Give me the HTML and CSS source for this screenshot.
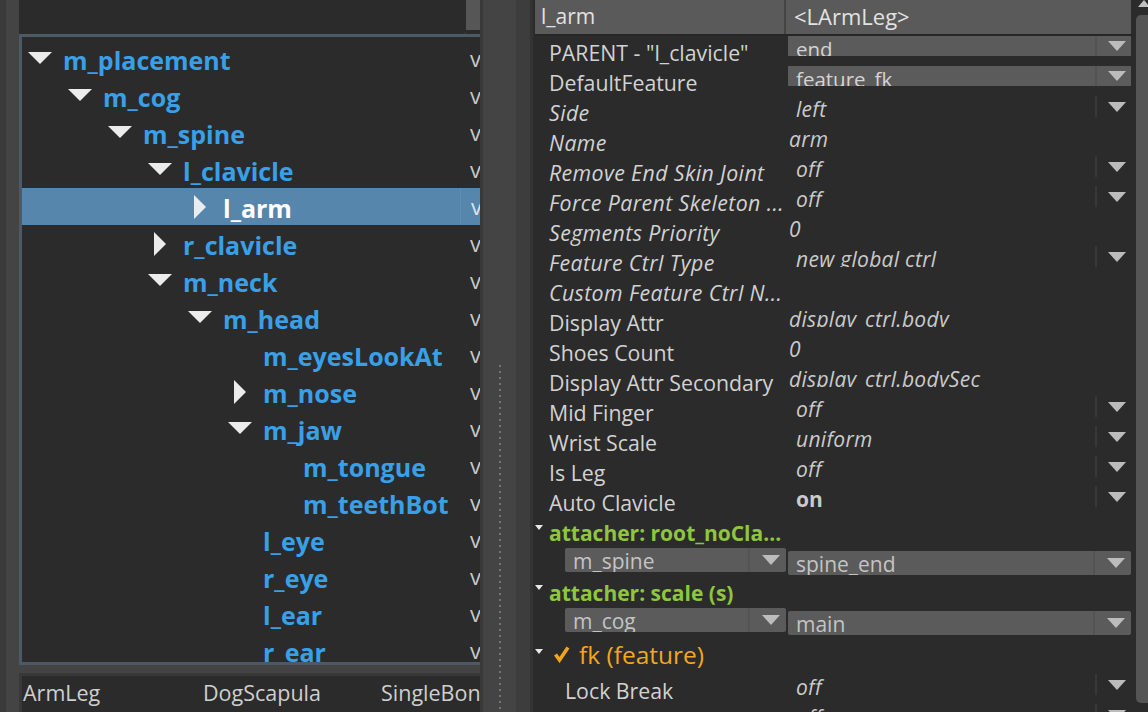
FILE: index.html
```html
<!DOCTYPE html>
<html>
<head>
<meta charset="utf-8">
<title>Rig Editor</title>
<link rel="stylesheet" href="styles.css">
</head>
<body>
<div class="app">
  <div class="left">
    <div class="topbox"><div class="topfill"></div><div class="topscroll"></div></div>
    <div class="tree">
      <div class="row d0"><span class="tw exp"></span><span class="name">m_placement</span><span class="vis">v</span></div>
      <div class="row d1"><span class="tw exp"></span><span class="name">m_cog</span><span class="vis">v</span></div>
      <div class="row d2"><span class="tw exp"></span><span class="name">m_spine</span><span class="vis">v</span></div>
      <div class="row d3"><span class="tw exp"></span><span class="name">l_clavicle</span><span class="vis">v</span></div>
      <div class="row d4 sel"><span class="tw col"></span><span class="name">l_arm</span><span class="vis">v</span></div>
      <div class="row d3"><span class="tw col"></span><span class="name">r_clavicle</span><span class="vis">v</span></div>
      <div class="row d3"><span class="tw exp"></span><span class="name">m_neck</span><span class="vis">v</span></div>
      <div class="row d4"><span class="tw exp"></span><span class="name">m_head</span><span class="vis">v</span></div>
      <div class="row d5"><span class="tw"></span><span class="name">m_eyesLookAt</span><span class="vis">v</span></div>
      <div class="row d5"><span class="tw col"></span><span class="name">m_nose</span><span class="vis">v</span></div>
      <div class="row d5"><span class="tw exp"></span><span class="name">m_jaw</span><span class="vis">v</span></div>
      <div class="row d6"><span class="tw"></span><span class="name">m_tongue</span><span class="vis">v</span></div>
      <div class="row d6"><span class="tw"></span><span class="name">m_teethBot</span><span class="vis">v</span></div>
      <div class="row d5"><span class="tw"></span><span class="name">l_eye</span><span class="vis">v</span></div>
      <div class="row d5"><span class="tw"></span><span class="name">r_eye</span><span class="vis">v</span></div>
      <div class="row d5"><span class="tw"></span><span class="name">l_ear</span><span class="vis">v</span></div>
      <div class="row d5"><span class="tw"></span><span class="name">r_ear</span><span class="vis">v</span></div>
    </div>
    <div class="list">
      <span class="item">ArmLeg</span>
      <span class="item">DogScapula</span>
      <span class="item">SingleBone</span>
    </div>
  </div>

  <div class="splitter">
    <div class="sp-a"></div>
    <div class="sp-b"><div class="dots"></div></div>
    <div class="sp-c"></div>
  </div>

  <div class="rpanel">
    <div class="props">
      <div class="hdr">
        <div class="hc hc1">l_arm</div>
        <div class="hc hc2">&lt;LArmLeg&gt;</div>
      </div>
      <div class="pbody">
        <div class="prow"><div class="lab">PARENT - "l_clavicle"</div><div class="val filled"><span class="vt">end</span><span class="dd"><i class="arr"></i></span></div></div>
        <div class="prow"><div class="lab">DefaultFeature</div><div class="val filled"><span class="vt">feature_fk</span><span class="dd"><i class="arr"></i></span></div></div>
        <div class="prow"><div class="lab it">Side</div><div class="val combo"><span class="vt">left</span><span class="dd"><i class="arr"></i></span></div></div>
        <div class="prow"><div class="lab it">Name</div><div class="val text"><span class="vt">arm</span></div></div>
        <div class="prow"><div class="lab it">Remove End Skin Joint</div><div class="val combo"><span class="vt">off</span><span class="dd"><i class="arr"></i></span></div></div>
        <div class="prow"><div class="lab it">Force Parent Skeleton ...</div><div class="val combo"><span class="vt">off</span><span class="dd"><i class="arr"></i></span></div></div>
        <div class="prow"><div class="lab it">Segments Priority</div><div class="val text"><span class="vt">0</span></div></div>
        <div class="prow"><div class="lab it">Feature Ctrl Type</div><div class="val combo"><span class="vt">new global ctrl</span><span class="dd"><i class="arr"></i></span></div></div>
        <div class="prow"><div class="lab it">Custom Feature Ctrl N...</div><div class="val text"><span class="vt"></span></div></div>
        <div class="prow"><div class="lab">Display Attr</div><div class="val text"><span class="vt">display_ctrl.body</span></div></div>
        <div class="prow"><div class="lab">Shoes Count</div><div class="val text"><span class="vt">0</span></div></div>
        <div class="prow"><div class="lab">Display Attr Secondary</div><div class="val text"><span class="vt">display_ctrl.bodySec</span></div></div>
        <div class="prow"><div class="lab">Mid Finger</div><div class="val combo"><span class="vt">off</span><span class="dd"><i class="arr"></i></span></div></div>
        <div class="prow"><div class="lab">Wrist Scale</div><div class="val combo"><span class="vt">uniform</span><span class="dd"><i class="arr"></i></span></div></div>
        <div class="prow"><div class="lab">Is Leg</div><div class="val combo"><span class="vt">off</span><span class="dd"><i class="arr"></i></span></div></div>
        <div class="prow"><div class="lab">Auto Clavicle</div><div class="val combo"><span class="vt bold">on</span><span class="dd"><i class="arr"></i></span></div></div>

        <div class="grp"><i class="gtri"></i><span class="gtitle green">attacher: root_noCla...</span></div>
        <div class="pair">
          <div class="box bl"><span class="bt">m_spine</span><span class="bdd"><i class="arr"></i></span></div>
          <div class="box br"><span class="bt">spine_end</span><span class="bdd"><i class="arr"></i></span></div>
        </div>
        <div class="grp"><i class="gtri"></i><span class="gtitle green">attacher: scale (s)</span></div>
        <div class="pair">
          <div class="box bl"><span class="bt">m_cog</span><span class="bdd"><i class="arr"></i></span></div>
          <div class="box br"><span class="bt">main</span><span class="bdd"><i class="arr"></i></span></div>
        </div>
        <div class="grp feat"><i class="gtri"></i><svg class="check" width="17" height="18" viewBox="0 0 17 18"><path d="M2.5 9.5 L6.5 15 L15 2.5" fill="none" stroke="#f0a51c" stroke-width="3.6" stroke-linejoin="miter" stroke-linecap="butt"/></svg><span class="ftitle">fk (feature)</span></div>
        <div class="prow sub"><div class="lab">Lock Break</div><div class="val combo"><span class="vt">off</span><span class="dd"><i class="arr"></i></span></div></div>
        <div class="prow sub"><div class="lab">Lock Length</div><div class="val combo"><span class="vt">off</span><span class="dd"><i class="arr"></i></span></div></div>
      </div>
    </div>
    <div class="vscroll"><i class="up"></i><div class="thumb"></div></div>
  </div>
</div>
</body>
</html>
```

FILE: styles.css
```css
* { box-sizing: border-box; margin: 0; padding: 0; }
html, body { width: 1148px; height: 712px; overflow: hidden; background: #444; }
body { font-family: "Open Sans", "Noto Sans", sans-serif; color: #cfcfcf; }

.app { display: flex; height: 712px; }

/* ---------- left panel ---------- */
.left {
  width: 480px; flex: none; display: flex; flex-direction: column;
  border-left: 6px solid #3a3a3a; padding-left: 13px; height: 712px; overflow: hidden;
}
.topbox { height: 34px; display: flex; flex: none; }
.topfill { flex: 1; background: #2b2b2b; border-bottom-right-radius: 3px; }
.topscroll { width: 14px; background: #2b2b2b; }
.topscroll::before { content: ""; display: block; height: 30px; background: #565656; }

.tree {
  height: 631px; flex: none; background: #2b2b2b; overflow: hidden;
  border-top: 3px solid #4d5a66; border-left: 3px solid #4d5a66; border-bottom: 3px solid #4d5a66;
  padding-top: 3px;
}
.row {
  height: 37px; display: flex; align-items: flex-start; white-space: nowrap;
  font-weight: 700; font-size: 25px; color: #39a0e8;
}
.row.d0 { padding-left: 6px; }
.row.d1 { padding-left: 46px; }
.row.d2 { padding-left: 86px; }
.row.d3 { padding-left: 126px; }
.row.d4 { padding-left: 166px; }
.row.d5 { padding-left: 206px; }
.row.d6 { padding-left: 246px; }
.row.sel { background: #5686ab; color: #fff; }
.tw { width: 24px; height: 37px; margin-right: 11px; flex: none; display: flex; align-items: center; justify-content: center; }
.tw.exp::before { content: ""; display: block; width: 0; height: 0; border-left: 12px solid transparent; border-right: 12px solid transparent; border-top: 12px solid #ececec; margin-top: -1px; }
.tw.col::before { content: ""; display: block; width: 0; height: 0; border-top: 12px solid transparent; border-bottom: 12px solid transparent; border-left: 12px solid #ececec; }
.name { flex: 1; line-height: 37px; padding-top: 2px; overflow: hidden; }
.vis { width: 20px; flex: none; padding-left: 10px; font-weight: 400; color: #c8c8c8; font-size: 22px; line-height: 37px; overflow: hidden; }
.row.sel .vis { border-left: 1px solid #5f8fb3; color: #d8e4ee; }

.list {
  margin-top: 8px; height: 39px; flex: none; background: #2b2b2b;
  border-top: 3px solid #383838; border-left: 3px solid #383838;
  display: flex; overflow: hidden; white-space: nowrap;
  font-size: 21.5px; line-height: 34px; color: #cfcfcf;
}
.item { flex: none; width: 180px; padding-left: 1px; overflow: hidden; }
.item:nth-child(2) { width: 178px; }
.item:nth-child(3) { width: 100px; }

/* ---------- splitter ---------- */
.splitter { width: 53px; flex: none; display: flex; }
.sp-a { width: 3px; background: #393939; }
.sp-b { width: 33px; background: #444; position: relative; }
.dots {
  position: absolute; left: 16px; top: 365px; width: 2px; bottom: 0;
  background: repeating-linear-gradient(to bottom, #747474 0 2px, transparent 2px 6px);
}
.sp-c { width: 17px; background: #3d3d3d; border-right: 3px solid #333; }

/* ---------- right panel ---------- */
.rpanel { flex: 1; display: flex; background: #2b2b2b; padding-left: 2px; }
.props { width: 598px; flex: none; }
.hdr { height: 36px; display: flex; border-bottom: 2px solid #262626; }
.hc { background: #5a5a5a; height: 34px; font-size: 22px; line-height: 32px; color: #e2e2e2; white-space: nowrap; }
.hc1 { width: 251px; padding-left: 6px; border-right: 2px solid #444; font-size: 21px; }
.hc2 { width: 345px; padding-left: 8px; }

.prow { height: 30px; display: flex; }
.lab { width: 253px; flex: none; padding-left: 14px; font-size: 21.3px; line-height: 30px; padding-top: 2px; white-space: nowrap; color: #d2d2d2; overflow: hidden; }
.lab.it { font-style: italic; letter-spacing: 0.4px; }
.val { width: 343px; flex: none; height: 21px; display: flex; overflow: hidden; }
.vt { flex: 1; font-size: 21px; line-height: 26px; font-style: italic; letter-spacing: 0.3px; white-space: nowrap; color: #cacaca; overflow: hidden; }
.vt.bold { font-style: normal; font-weight: 700; letter-spacing: 0; }
.val.combo .vt { padding-left: 8px; }
.val.text .vt { padding-left: 1px; }
.val.filled { background: #5b5b5b; height: 20px; }
.val.filled .vt { font-style: normal; letter-spacing: 0; font-size: 20.5px; padding-left: 8px; color: #d4d4d4; }
.dd { width: 36px; flex: none; border-left: 2px solid #383838; display: flex; align-items: center; padding-left: 11px; }
.val.filled .dd { border-left-color: #535353; }
.arr { display: block; width: 0; height: 0; border-left: 9px solid transparent; border-right: 9px solid transparent; border-top: 10px solid #bcbcbc; }

.grp { height: 30px; display: flex; align-items: center; white-space: nowrap; }
.gtri { display: block; width: 0; height: 0; border-left: 4px solid transparent; border-right: 4px solid transparent; border-top: 5px solid #e8e8e8; margin: 0 6px 8px 0; }
.gtitle { font-size: 21px; font-weight: 700; line-height: 30px; padding-top: 4px; }
.green { color: #8dc63f; }

.pair { height: 30px; display: flex; padding-left: 30px; align-items: flex-start; }
.box { height: 24px; display: flex; background: #5b5b5b; overflow: hidden; border-radius: 2px; }
.bl { width: 221px; margin-top: 2px; }
.br { width: 343px; margin-left: 2px; margin-top: 5px; }
.bt { flex: 1; font-size: 21px; line-height: 26px; color: #c4c4c4; padding-left: 8px; white-space: nowrap; }
.bdd { width: 38px; flex: none; border-left: 2px solid #535353; display: flex; align-items: center; padding-left: 12px; }

.grp.feat { height: 38px; }
.check { margin-left: 4px; margin-right: 9px; margin-bottom: 2px; }
.ftitle { font-size: 24.5px; line-height: 38px; color: #f2a71e; }

.prow.sub .lab { padding-left: 30px; }

.vscroll { width: 15px; flex: none; position: relative; padding-left: 3px; }
.up { position: absolute; right: -2px; top: 0; width: 0; height: 0; border-left: 6px solid transparent; border-right: 6px solid transparent; border-bottom: 7px solid #c0c0c0; }
.thumb { margin-top: 15px; height: 688px; background: #555; border-radius: 5px 0 0 5px; }
```
